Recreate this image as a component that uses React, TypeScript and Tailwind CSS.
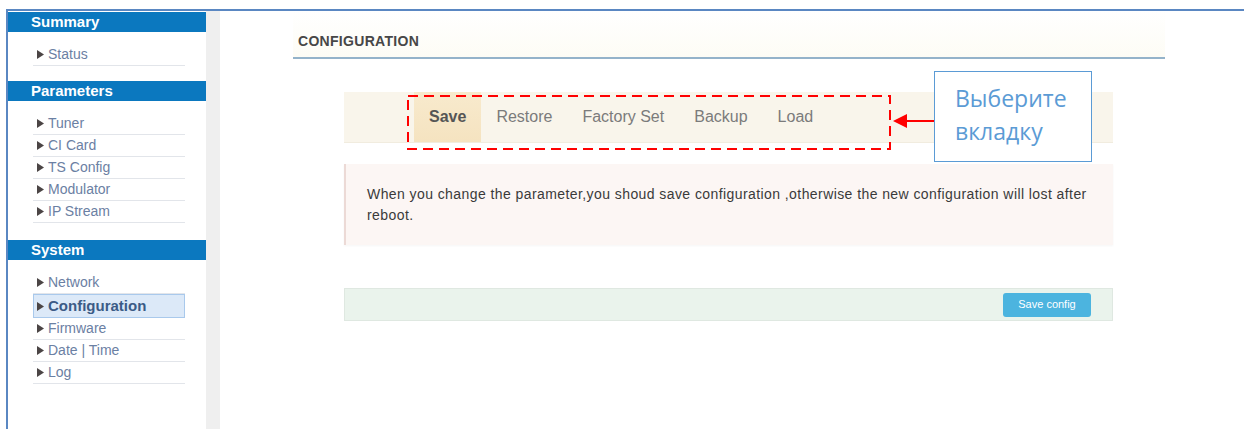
import React from 'react';

type Section = { title: string; items: string[] };

const menu: Section[] = [
  { title: 'Summary', items: ['Status'] },
  { title: 'Parameters', items: ['Tuner', 'CI Card', 'TS Config', 'Modulator', 'IP Stream'] },
  { title: 'System', items: ['Network', 'Configuration', 'Firmware', 'Date | Time', 'Log'] },
];

const tabs = ['Save', 'Restore', 'Factory Set', 'Backup', 'Load'];

const Arrow: React.FC = () => (
  <svg width="7" height="9" viewBox="0 0 7 9" className="shrink-0">
    <polygon points="0,0 7,4.5 0,9" fill="#4b4545" />
  </svg>
);

const Sidebar: React.FC<{ active: string }> = ({ active }) => (
  <div className="w-[198px] shrink-0 bg-white pt-px">
    {menu.map((section, i) => (
      <div key={section.title} className={i === 0 ? '' : i === 1 ? 'mt-[15px]' : 'mt-[17px]'}>
        <div className="h-[20px] bg-[#0b78bf] pl-[23px] text-[15px] font-bold leading-[20px] text-white">
          {section.title}
        </div>
        <div className="pt-[12px]">
          {section.items.map(item =>
            item === active ? (
              <div
                key={item}
                className="ml-[25px] flex h-[24px] w-[152px] items-center gap-[4px] border border-[#a9c9ec] bg-[#dce9f8] pl-[3px] text-[15px] font-bold text-[#3b5b86]"
              >
                <Arrow />
                <span>{item}</span>
              </div>
            ) : (
              <div
                key={item}
                className="ml-[25px] flex h-[22px] w-[152px] items-center gap-[4px] border-b border-[#e2e5ea] pl-[4px] text-[14px] text-[#6b80a3]"
              >
                <Arrow />
                <span>{item}</span>
              </div>
            )
          )}
        </div>
      </div>
    ))}
  </div>
);

const App: React.FC = () => {
  return (
    <div className="relative h-[429px] w-[1244px] overflow-hidden bg-white font-['Liberation_Sans',Arial,sans-serif]">
      <div className="ml-[6px] mt-[9px] flex h-[420px] border-l-2 border-t-2 border-[#5a87c2]">
        <Sidebar active="Configuration" />
        <div className="w-[14px] shrink-0 bg-[#efefef]" />

        {/* Configuration page */}
        <div className="flex-1 pl-[73px]">
          <div className="h-[48px] w-[872px] border-b-2 border-[#94b3ca] bg-gradient-to-b from-white to-[#fdfcf5] pl-[5px] pt-[22px] text-[14px] font-bold leading-[16px] tracking-[0.3px] text-[#474747]">
            CONFIGURATION
          </div>

          <div className="ml-[51px] w-[769px]">
            <div className="mt-[33px] flex h-[51px] border-b border-[#f1ecdf] bg-[#f9f5eb] pl-[70px]">
              {tabs.map(tab => (
                <div
                  key={tab}
                  className={
                    tab === 'Save'
                      ? 'flex h-full items-center bg-gradient-to-b from-[#f8eacd] to-[#f5e3c0] px-[15px] text-[16px] font-bold text-[#555]'
                      : 'flex h-full items-center px-[15px] text-[16px] text-[#7b7b7b]'
                  }
                >
                  {tab}
                </div>
              ))}
            </div>

            <div className="mt-[21px] h-[81px] border-l-2 border-[#ecdad6] bg-[#fcf6f4] pl-[21px] pr-[14px] pt-[20px] text-[14px] leading-[21px] tracking-[0.42px] text-[#3a3a3a] shadow-[0_1px_2px_rgba(0,0,0,0.04)]">
              When you change the parameter,you shoud save configuration ,otherwise the new configuration will lost after reboot.
            </div>

            <div className="mt-[43px] flex h-[33px] items-center justify-end border border-[#dfe8e1] bg-[#eaf3ec] pr-[21px]">
              <button className="h-[24px] w-[88px] rounded-[3px] bg-[#4cb4df] text-[11px] text-white">
                Save config
              </button>
            </div>
          </div>
        </div>
      </div>

      {/* tab hint overlay */}
      <svg className="pointer-events-none absolute left-0 top-0" width="1244" height="429">
        <rect x="408" y="96" width="482" height="53" fill="none" stroke="#ff0000" strokeWidth="2" strokeDasharray="10 6" />
        <line x1="934" y1="121" x2="905" y2="121" stroke="#ff0000" strokeWidth="2" />
        <polygon points="893,121 907,114 907,128" fill="#ff0000" />
      </svg>
      <div className="absolute left-[934px] top-[71px] h-[91px] w-[158px] border border-[#5b9bd5] bg-white pl-[20px] pt-[10px] font-['Open_Sans',sans-serif] text-[23px] leading-[33px] text-[#5b9bd5]">
        Выберите
        <br />
        вкладку
      </div>
    </div>
  );
};

export default App;
